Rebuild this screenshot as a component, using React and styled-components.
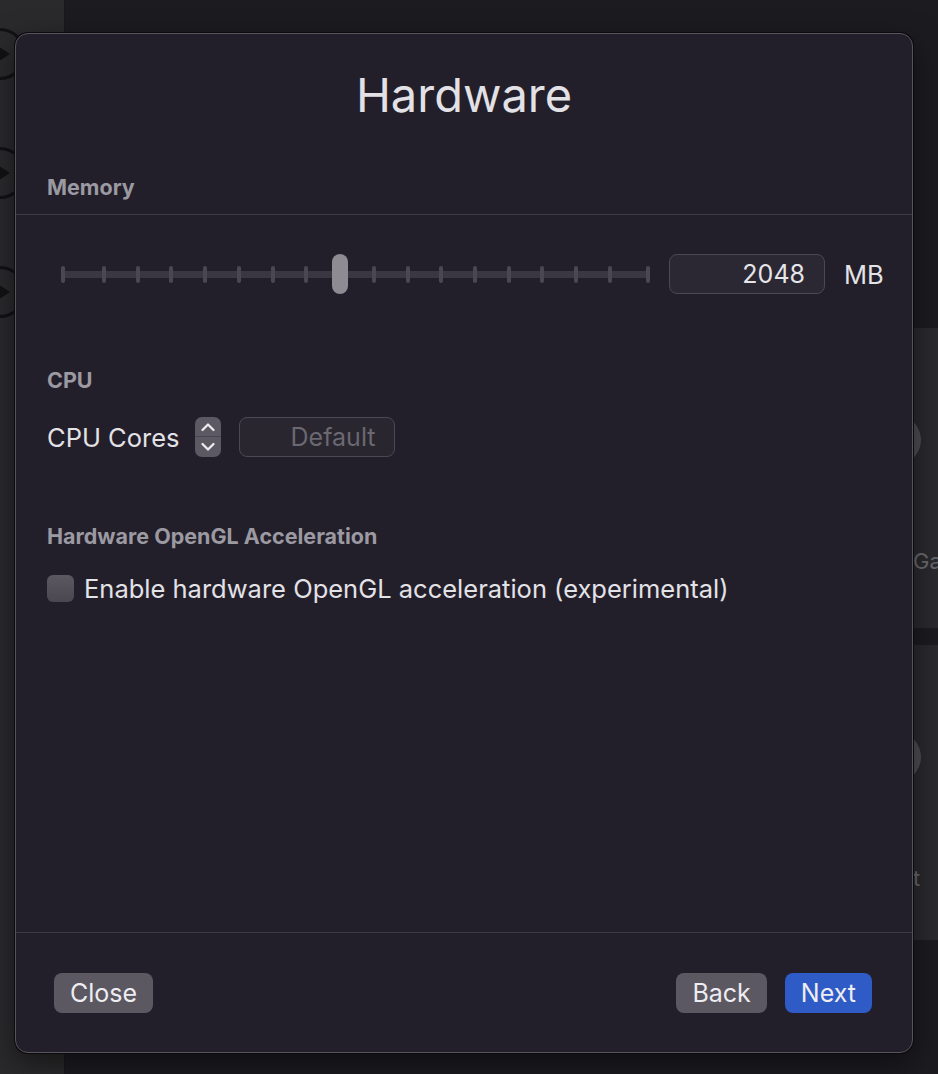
import { createGlobalStyle } from 'styled-components';
import styled from 'styled-components';

const GlobalStyle = createGlobalStyle`
  html, body {
    margin: 0;
    padding: 0;
    background: #1c1b20;
    font-family: Inter, "Noto Sans", "Liberation Sans", sans-serif;
    -webkit-font-smoothing: antialiased;
  }
`;

export const Page = styled.div`
  position: relative;
  display: flex;
  width: 938px;
  height: 1074px;
  overflow: hidden;
`;

export const Sidebar = styled.div`
  width: 64px;
  flex: none;
  background: #2a2a2c;
  border-right: 1px solid #19181c;
  display: flex;
  flex-direction: column;
  gap: 67px;
  padding-top: 28px;
`;

export const PlayCircle = styled.div`
  width: 46px;
  height: 46px;
  margin-left: -26px;
  border: 3px solid #121114;
  border-radius: 50%;
  display: flex;
  align-items: center;
  justify-content: center;
  &::after {
    content: "";
    margin-left: 6px;
    border-left: 14px solid #121114;
    border-top: 9px solid transparent;
    border-bottom: 9px solid transparent;
  }
`;

export const Main = styled.div`
  flex: 1;
  background: #1c1b20;
  display: flex;
  flex-direction: column;
  align-items: flex-end;
  gap: 17px;
  padding-top: 328px;
`;

export const Tile = styled.div`
  width: 120px;
  height: ${p => p.$h}px;
  background: #2a292d;
  display: flex;
  flex-direction: column;
  align-items: flex-start;
  padding-left: 13px;
  box-sizing: border-box;
  overflow: hidden;
`;

export const TileIcon = styled.div`
  width: 50px;
  height: 50px;
  margin-top: 87px;
  margin-left: 40px;
  border-radius: 50%;
  background: #4e4d52;
`;

export const TileLabel = styled.div`
  margin-top: 83px;
  margin-left: ${p => p.$ml}px;
  font-size: 22px;
  color: #6a696e;
  white-space: nowrap;
`;

export const Dialog = styled.div`
  position: absolute;
  left: 15px;
  top: 33px;
  width: 898px;
  height: 1020px;
  box-sizing: border-box;
  background: #231f2a;
  border: 1px solid #57545d;
  border-radius: 13px;
  box-shadow: 0 0 0 1px #0b0a0d, 0 10px 30px rgba(0, 0, 0, 0.5);
  display: flex;
  flex-direction: column;
  color: #e3e2e7;
`;

export const Title = styled.h1`
  margin: 0;
  padding-top: 32px;
  height: 58px;
  line-height: 58px;
  text-align: center;
  font-size: 47px;
  font-weight: 400;
  color: #e2e1e6;
`;

export const SectionLabel = styled.div`
  padding-left: 31px;
  margin-top: ${p => p.$top}px;
  font-size: 21.5px;
  line-height: 26px;
  font-weight: 700;
  color: #9b99a1;
`;

export const Separator = styled.div`
  height: 1px;
  background: #3d3a45;
  margin-top: ${p => p.$top || 0}px;
`;

export const Body = styled.div`
  flex: 1;
  display: flex;
  flex-direction: column;
`;

export const Row = styled.div`
  display: flex;
  align-items: center;
  padding-left: ${p => p.$left || 31}px;
  margin-top: ${p => p.$top}px;
  height: 40px;
  font-size: 25.5px;
`;

export const SliderTrack = styled.div`
  position: relative;
  width: 586px;
  height: 7px;
  background: #3a3743;
  border-radius: 2px;
`;

export const Tick = styled.div`
  position: absolute;
  top: -5px;
  width: 4px;
  height: 17px;
  margin-left: -2px;
  border-radius: 2px;
  background: #4a4753;
`;

export const Thumb = styled.div`
  position: absolute;
  top: -17px;
  width: 16px;
  height: 40px;
  margin-left: -8px;
  border-radius: 8px;
  background: #8e8b93;
`;

export const Field = styled.div`
  width: ${p => p.$w}px;
  height: 40px;
  box-sizing: border-box;
  border: 1px solid #4b4853;
  border-radius: 8px;
  background: ${p => p.$bg || '#2b2833'};
  display: flex;
  align-items: center;
  justify-content: flex-end;
  padding-right: 19px;
  margin-left: ${p => p.$ml}px;
  color: ${p => (p.$dim ? '#6b6872' : '#e6e5e9')};
  font-size: 25px;
`;

export const Unit = styled.span`
  margin-left: 19px;
  color: #e3e2e7;
`;

export const Stepper = styled.div`
  width: 26px;
  height: 40px;
  margin-left: 16px;
  border-radius: 7px;
  background: #5c5962;
  display: flex;
  flex-direction: column;
  align-items: center;
  justify-content: space-between;
  box-sizing: border-box;
  padding: 5px 0;
  position: relative;
  &::after {
    content: "";
    position: absolute;
    left: 0;
    right: 0;
    top: 19px;
    height: 1px;
    background: #47444d;
  }
`;

export const Checkbox = styled.div`
  width: 27px;
  height: 27px;
  border-radius: 6px;
  background: linear-gradient(#5b5861, #4a4750);
  margin-right: 10px;
`;

export const Footer = styled.div`
  display: flex;
  align-items: center;
  justify-content: space-between;
  padding: 40px 40px 39px 38px;
`;

export const ButtonGroup = styled.div`
  display: flex;
  gap: 18px;
`;

export const Button = styled.button`
  height: 40px;
  min-width: ${p => p.$w}px;
  border: none;
  border-radius: 8px;
  background: ${p => (p.$primary ? '#2e5bc5' : '#5b5862')};
  color: #eeedf1;
  font-family: inherit;
  font-size: 25px;
  padding: 0 16px;
`;

const Chevron = ({ up }) => (
  <svg width="16" height="10" viewBox="0 0 16 10">
    <path
      d={up ? 'M2.5 8 L8 2.5 L13.5 8' : 'M2.5 2 L8 7.5 L13.5 2'}
      fill="none"
      stroke="#ecebef"
      strokeWidth="2.3"
      strokeLinecap="round"
      strokeLinejoin="round"
    />
  </svg>
);

const ticks = [0, 41];
for (let i = 1; i < 16; i++) ticks.push(41 + i * 33.73);
ticks.push(585);

export default function App() {
  return (
    <>
      <GlobalStyle />
      <Page>
        <Sidebar>
          <PlayCircle />
          <PlayCircle />
          <PlayCircle />
        </Sidebar>
        <Main>
          <Tile $h={300}>
            <TileIcon />
            <TileLabel $ml={82}>Ga</TileLabel>
          </Tile>
          <Tile $h={295}>
            <TileIcon />
            <TileLabel $ml={82}>t</TileLabel>
          </Tile>
        </Main>

        <Dialog>
          <Title>Hardware</Title>
          <SectionLabel $top={50}>Memory</SectionLabel>
          <Separator $top={14} />
          <Body>
            <Row $top={39} $left={47}>
              <SliderTrack>
                {ticks.map((t, i) => (
                  <Tick key={i} style={{ left: t }} />
                ))}
                <Thumb style={{ left: 277 }} />
              </SliderTrack>
              <Field $w={156} $ml={20}>2048</Field>
              <Unit>MB</Unit>
            </Row>
            <SectionLabel $top={73}>CPU</SectionLabel>
            <Row $top={24}>
              CPU Cores
              <Stepper>
                <Chevron up />
                <Chevron />
              </Stepper>
              <Field $w={156} $ml={18} $bg="#29262f" $dim>Default</Field>
            </Row>
            <SectionLabel $top={66}>Hardware OpenGL Acceleration</SectionLabel>
            <Row $top={19}>
              <Checkbox />
              Enable hardware OpenGL acceleration (experimental)
            </Row>
          </Body>
          <Separator />
          <Footer>
            <Button $w={99}>Close</Button>
            <ButtonGroup>
              <Button $w={90}>Back</Button>
              <Button $w={86} $primary>Next</Button>
            </ButtonGroup>
          </Footer>
        </Dialog>
      </Page>
    </>
  );
}
